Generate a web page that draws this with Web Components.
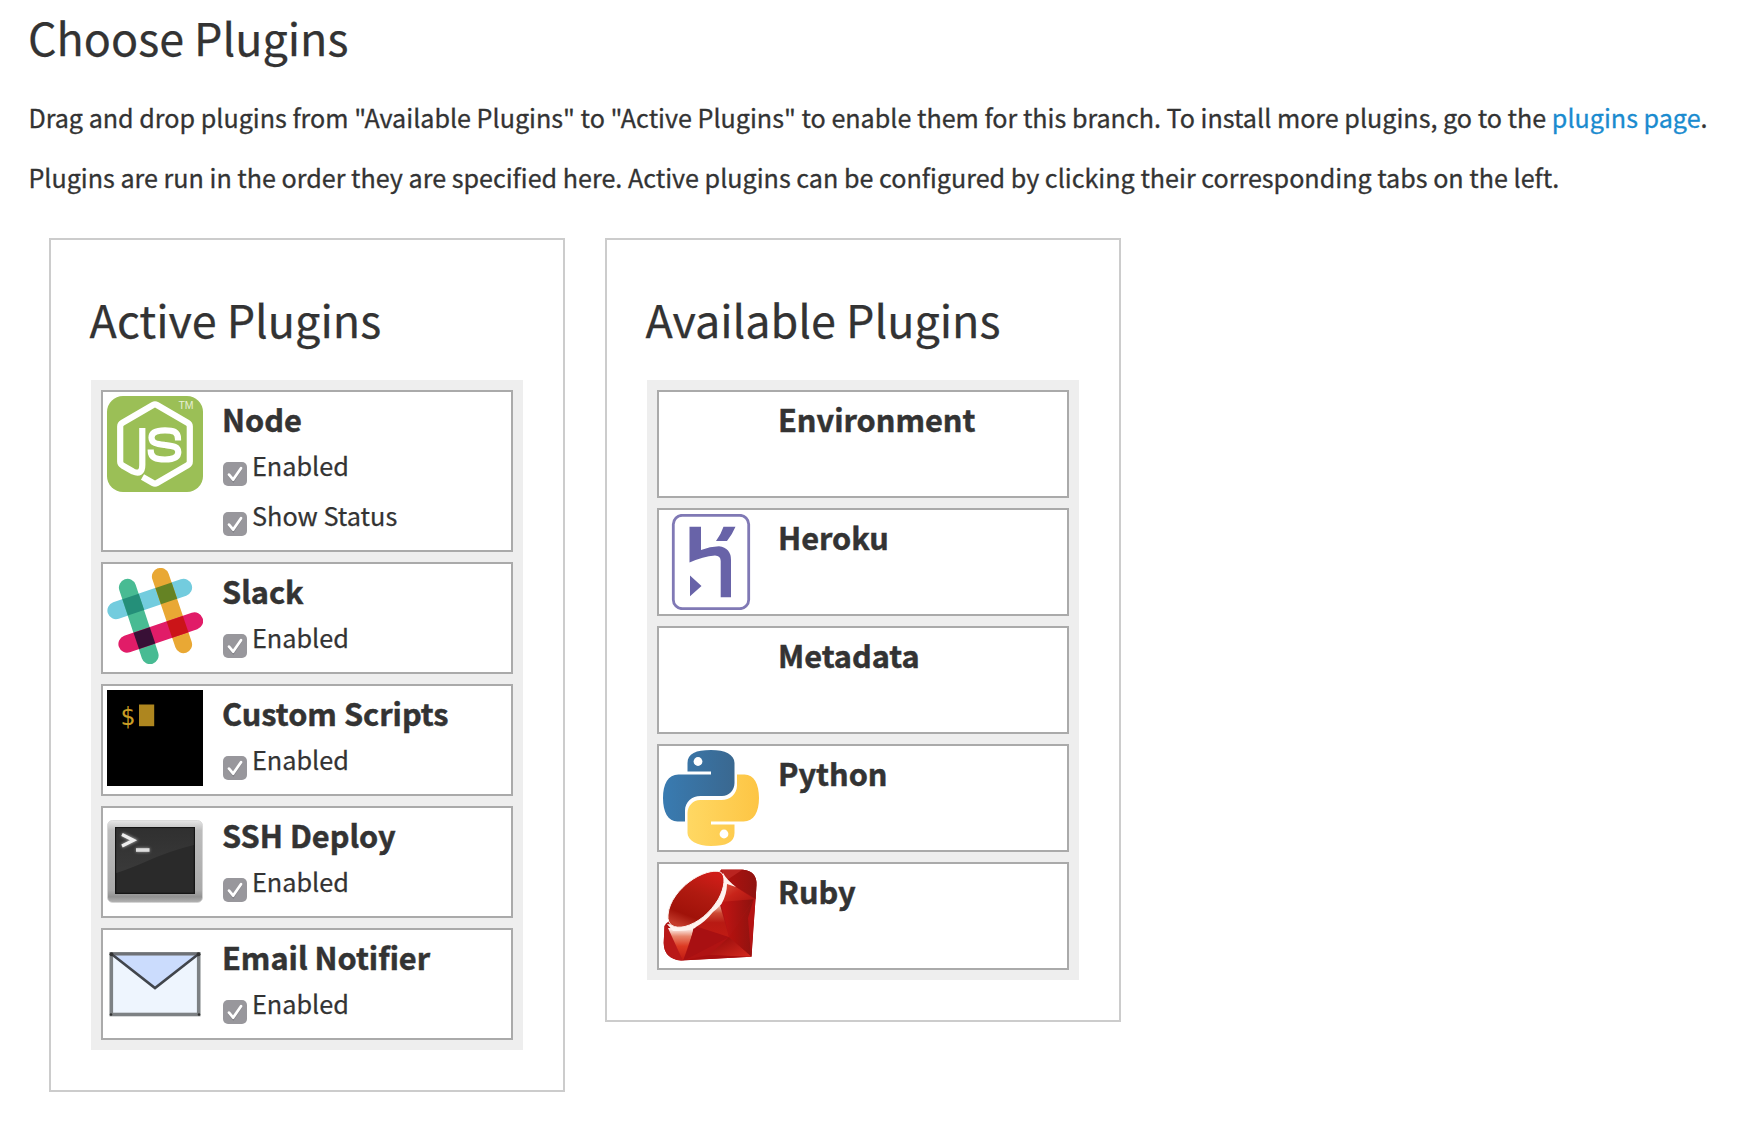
<!DOCTYPE html>
<html lang="en">
<head>
<meta charset="utf-8">
<title>Choose Plugins</title>
<style>
  body { margin: 0; background: #fff; color: #333; font-family: "Noto Sans CJK SC", "Noto Sans", sans-serif; }
</style>
</head>
<body>
<plugin-page heading="Choose Plugins">
  <p slot="intro">Drag and drop plugins from "Available Plugins" to "Active Plugins" to enable them for this branch. To install more plugins, go to the <page-link>plugins page</page-link>.</p>
  <p slot="intro">Plugins are run in the order they are specified here. Active plugins can be configured by clicking their corresponding tabs on the left.</p>
  <plugin-list heading="Active Plugins">
    <plugin-card name="Node"><plugin-icon slot="icon" kind="node"></plugin-icon><check-option>Enabled</check-option><check-option>Show Status</check-option></plugin-card>
    <plugin-card name="Slack"><plugin-icon slot="icon" kind="slack"></plugin-icon><check-option>Enabled</check-option></plugin-card>
    <plugin-card name="Custom Scripts"><plugin-icon slot="icon" kind="scripts"></plugin-icon><check-option>Enabled</check-option></plugin-card>
    <plugin-card name="SSH Deploy"><plugin-icon slot="icon" kind="ssh"></plugin-icon><check-option>Enabled</check-option></plugin-card>
    <plugin-card name="Email Notifier"><plugin-icon slot="icon" kind="email"></plugin-icon><check-option>Enabled</check-option></plugin-card>
  </plugin-list>
  <plugin-list heading="Available Plugins">
    <plugin-card name="Environment"></plugin-card>
    <plugin-card name="Heroku"><plugin-icon slot="icon" kind="heroku"></plugin-icon></plugin-card>
    <plugin-card name="Metadata"></plugin-card>
    <plugin-card name="Python"><plugin-icon slot="icon" kind="python"></plugin-icon></plugin-card>
    <plugin-card name="Ruby"><plugin-icon slot="icon" kind="ruby"></plugin-icon></plugin-card>
  </plugin-list>
</plugin-page>

<script>
const ICONS = {
  node: `
    <rect width="96" height="96" rx="16" fill="#9bbf56"/>
    <g fill="none" stroke="#fff" stroke-width="6.2" stroke-linejoin="round">
      <path d="M35.3 32 V69 Q35.3 79.5 26 75.5 L15.500 69.500 Q13.200 68 13.200 65.500 V30.500 Q13.200 28 15.500 26.700 L46 9 Q48 7.800 50 9 L80.500 26.700 Q82.800 28 82.800 30.500 V65.500 Q82.800 68 80.500 69.300 L50 87 Q48 88.200 46 87 L35.500 81"/>
      <path d="M71 44.500 V43 C71 35.500 66 34.300 58 34.300 C50 34.300 44.500 36 44.500 41.500 C44.500 47.500 50 48 58 49 C66 50 71.300 50.500 71.300 56 C71.300 62 66 63.500 58 63.500 C49 63.500 43.700 62 43.700 54.500 V53.500"/>
    </g>
    <text x="71.500" y="13" font-family="Liberation Sans" font-size="10.500" fill="#e6efd5" textLength="15">TM</text>`,
  slack: `
    <g fill="none" stroke-width="17.200" stroke-linecap="round">
      <path d="M9 42.500 L76.500 19.500" stroke="#73ccde"/>
      <path d="M20.500 19.500 L43 87.500" stroke="#48bb93"/>
      <path d="M53.500 8.500 L76.500 76.500" stroke="#e9a834"/>
      <path d="M20 76 L87.500 53" stroke="#e11c68"/>
    </g>
    <g>
      <rect x="-8.600" y="-8.600" width="17.200" height="17.200" transform="translate(26.300 36.600) rotate(-18.700)" fill="#248f79"/>
      <rect x="-8.600" y="-8.600" width="17.200" height="17.200" transform="translate(59.300 25.400) rotate(-18.700)" fill="#658324"/>
      <rect x="-8.600" y="-8.600" width="17.200" height="17.200" transform="translate(37.400 70.100) rotate(-18.700)" fill="#380f36"/>
      <rect x="-8.600" y="-8.600" width="17.200" height="17.200" transform="translate(70.500 58.800) rotate(-18.700)" fill="#cb1418"/>
    </g>`,
  scripts: `
    <rect width="96" height="96" fill="#000"/>
    <text x="13.200" y="34.500" font-family="DejaVu Sans Mono" font-size="24.500" fill="#c99d25">$</text>
    <rect x="32" y="14.500" width="15.200" height="21.700" fill="#ae861f"/>`,
  ssh: `
    <defs>
      <linearGradient id="fr" x2="0" y2="1"><stop offset="0" stop-color="#e6e6e6"/><stop offset=".12" stop-color="#bdbdbd"/><stop offset=".85" stop-color="#aaa"/><stop offset=".93" stop-color="#929292"/><stop offset="1" stop-color="#b4b4b4"/></linearGradient>
      <linearGradient id="hi" x2="0" y2="1"><stop offset="0" stop-color="#303030"/><stop offset="1" stop-color="#3a3a3a"/></linearGradient>
      <filter id="gl" x="-50%" y="-50%" width="200%" height="200%"><feGaussianBlur stdDeviation="1.500"/></filter>
    </defs>
    <rect x=".5" y="8.500" width="95" height="82" rx="5" fill="url(#fr)" stroke="#d4d4d4" stroke-width=".8"/>
    <rect x="8" y="15" width="80" height="67" fill="#151515"/>
    <rect x="9.300" y="16.300" width="77.400" height="64.400" fill="#2a2a2a"/>
    <path d="M9.300 16.300 H86.700 V33 Q62 39 38 50 Q22 57 9.300 61Z" fill="url(#hi)"/>
    <g fill="none"><path d="M15 22.500 L27 28.300 L15 34 M29 38 H42.500" stroke="#999" stroke-width="4" filter="url(#gl)"/><path d="M15 22.500 L26.500 28.300 L15 34" stroke="#eee" stroke-width="3.200"/><path d="M29 38 H42.500" stroke="#ddd" stroke-width="3.600"/></g>`,
  email: `
    <rect x="4.300" y="19.800" width="87.400" height="60.700" fill="#eef5fe"/>
    <path d="M4.500 20 H91.500 L48 54Z" fill="#cbdcfd"/>
    <rect x="4.300" y="19.800" width="87.400" height="60.700" fill="none" stroke="#7d8184" stroke-width="3.600"/>
    <path d="M4.500 20 L48 54 L91.500 20" fill="none" stroke="#41454c" stroke-width="2.600"/>
    <path d="M3.500 20 H92.500" stroke="#6a6d72" stroke-width="1.500"/>
    <g fill="#333"><circle cx="4.500" cy="20.300" r="2"/><circle cx="91.500" cy="20.300" r="2"/><circle cx="4" cy="80.500" r="1.300"/><circle cx="92" cy="80.500" r="1.300"/></g>`,
  heroku: `
    <rect x="10.300" y="1.300" width="75.400" height="93.400" rx="9" fill="none" stroke="#8079b5" stroke-width="2.800"/>
    <path fill="#6863a8" d="M26.500 12.800 H38 V36 Q47 32.300 56 32.300 Q68 34 68 46 V83.300 H57.700 V47 Q57.700 41.700 52 41.500 Q40 42.500 26.500 48.500Z M60.500 12.800 H72.500 Q69.500 20 64 27 H53 Q58 20.500 60.500 12.800Z M27 61.500 L38.500 72 L27 82.300Z"/>`,
  python: `
    <defs>
      <linearGradient id="pb"><stop offset="0" stop-color="#397bb1"/><stop offset="1" stop-color="#3a6890"/></linearGradient>
      <linearGradient id="py"><stop offset="0" stop-color="#ffd863"/><stop offset="1" stop-color="#fdc544"/></linearGradient>
    </defs>
    <path fill="url(#pb)" d="M48 0 C33 0 24.500 3.500 24.500 13 V21.500 H48 V24.500 H15.500 C5 24.500 0 34 0 48 C0 62 5 71.500 14.500 71.500 H22 V60.500 C22 52 29 46 37.500 46 H59 C66 46 71.500 40 71.500 33 V13 C71.500 4.500 62 0 48 0Z"/>
    <circle cx="35" cy="11.500" r="4.400" fill="#fff"/>
    <path fill="url(#py)" d="M48 96 C63 96 71.500 92.500 71.500 83 V74.500 H48 V71.500 H80.500 C91 71.500 96 62 96 48 C96 34 91 24.500 81.500 24.500 H74 V35.500 C74 44 67 50 58.500 50 H37 C30 50 24.500 56 24.500 63 V83 C24.500 90 34 96 48 96Z"/>
    <circle cx="61" cy="84" r="4.400" fill="#fff"/>`,
  ruby: `
    <defs>
      <linearGradient id="r1" x1=".7" y1="0" x2=".3" y2="1"><stop offset="0" stop-color="#d01d18"/><stop offset=".4" stop-color="#b01a10"/><stop offset=".8" stop-color="#a01209"/><stop offset="1" stop-color="#c43a2a"/></linearGradient>
      <linearGradient id="r2" x2="0" y2="1"><stop offset="0" stop-color="#fff"/><stop offset=".25" stop-color="#e8866c"/><stop offset=".55" stop-color="#dc3a22"/><stop offset="1" stop-color="#be1712"/></linearGradient>
      <linearGradient id="r3" x2="0" y2="1"><stop offset="0" stop-color="#f0c0ac"/><stop offset=".25" stop-color="#cd4a34"/><stop offset=".55" stop-color="#b81a13"/><stop offset="1" stop-color="#c01b14"/></linearGradient>
      <linearGradient id="r4" x2="1" y2="1"><stop offset="0" stop-color="#df5b43"/><stop offset=".5" stop-color="#c8241a"/><stop offset="1" stop-color="#aa1511"/></linearGradient>
      <linearGradient id="r5" x2="1" y2="1"><stop offset="0" stop-color="#8f0809"/><stop offset="1" stop-color="#d62a1f"/></linearGradient>
      <linearGradient id="r6" x2="1" y2="0"><stop offset="0" stop-color="#c31413"/><stop offset="1" stop-color="#8c120e"/></linearGradient>
      <linearGradient id="r7" x2="1" y2="0"><stop offset="0" stop-color="#b5110e"/><stop offset="1" stop-color="#8e1310"/></linearGradient>
      <clipPath id="rc"><path d="M58 1.800 H80 Q94 3 93.500 17 L88.500 88.800 L18 92.500 Q1 91 .7 75 L1.500 58 L3 55.500 L10 50 L55 5Z"/></clipPath>
    </defs>
    <g clip-path="url(#rc)">
      <rect width="96" height="96" fill="#b01313"/>
      <path d="M0 54 L7 62 L20 93 H0Z" fill="#b91818"/>
      <path d="M5 60 L31 61 L20 93Z" fill="url(#r2)"/>
      <path d="M31 57 L66 69 L20 93 Q28 76 31 57Z" fill="#a81012"/>
      <path d="M32 58 L57 37 L66 69Z" fill="url(#r3)"/>
      <path d="M66 69 L89 89 L46 87Z" fill="url(#r5)"/>
      <path d="M18 93 L46 87 L89 89Z" fill="#a80f0f"/>
      <path d="M58 34 L91 31 L66 69Z" fill="url(#r6)"/>
      <path d="M91 31 L89 89 L66 69Z" fill="url(#r7)"/>
      <path d="M94 20 L88 89 L85 50Z" fill="#b51313"/>
      <path d="M64 13 L91 31 L58 34Z" fill="url(#r4)"/>
      <path d="M57 0 H94 V32 L64 13Z" fill="url(#r7)"/>
      <path d="M57 0 H82 L64 12Z" fill="#ba2420"/>
      <path d="M60 5 Q64 12 73 19 L64 16 Q64 26 58.500 36 Q54 41 50 44 Q42 54 33 59 Q30 63 10 63 L4 56 L14 57 Q32 55 48 38 Q60 22 59 8Z" fill="#fff3ef"/>
    </g>
    <path d="M5 47 C6 33 17 21 26 14 C38 5 50 1.800 57 3.800 C63.500 7 61.500 20 55.500 31 C47 45 35 55 22 58.500 C11 61 4 57 5 47Z" fill="url(#r1)" stroke="#fdf1ed" stroke-width="1"/>`
};

/* Defines an element whose open shadow root is filled from its render() markup. */
const define = (tag, render) => customElements.define(tag, class extends HTMLElement {
  connectedCallback() {
    if (this.shadowRoot) return;
    const t = document.createElement('template');
    t.innerHTML = render(this);
    this.attachShadow({ mode: 'open' }).append(t.content.cloneNode(true));
  }
});

define('plugin-icon', el => `
  <style>:host { display: block; width: 96px; height: 96px; } svg { display: block; }</style>
  <svg width="96" height="96" viewBox="0 0 96 96">${ICONS[el.getAttribute('kind')] || ''}</svg>`);

define('page-link', () => `
  <style>:host { display: inline; } a { color: #1a8bcf; text-decoration: none; }</style>
  <a href="#"><slot></slot></a>`);

define('check-option', () => `
  <style>
    :host { display: flex; gap: 5px; height: 50px; line-height: 50px; font-size: 25.250px; padding-left: 1px; white-space: nowrap; -webkit-text-stroke: .25px; }
    svg { display: block; flex: none; margin-top: 22px; }
  </style>
  <svg width="24" height="24" viewBox="0 0 24 24">
    <rect width="24" height="24" rx="5" fill="#98979c"/>
    <path d="M6 13.800 L10.300 19 L18 7.200" fill="none" stroke="#77767b" stroke-width="2.400" stroke-linecap="round" opacity=".6"/>
    <path d="M6 12.600 L10.200 17.600 L18 6.200" fill="none" stroke="#fff" stroke-width="2.700" stroke-linecap="round" stroke-linejoin="round"/>
  </svg>
  <span><slot></slot></span>`);

define('plugin-card', el => `
  <style>
    :host { display: flex; gap: 19px; box-sizing: border-box; padding: 4px; background: #fff; border: 2px solid #aaa; min-height: 108px; }
    .icon { flex: none; width: 96px; height: 96px; }
    .body { padding-top: 3px; }
    h3 { margin: 0; font-size: 30.700px; line-height: 40px; height: 41px; font-weight: 700; white-space: nowrap; -webkit-text-stroke: .5px; }
    .options { display: block; }
    .options.filled { padding-bottom: 6px; }
  </style>
  <div class="icon"><slot name="icon"></slot></div>
  <div class="body">
    <h3>${el.getAttribute('name')}</h3>
    <div class="options ${el.querySelector('check-option') ? 'filled' : ''}"><slot></slot></div>
  </div>`);

define('plugin-list', el => `
  <style>
    :host { display: block; box-sizing: border-box; width: 516px; border: 2px solid #ccc; padding: 49px 40px 40px; }
    h2 { margin: 0 0 31px; font-size: 44.900px; line-height: 60px; font-weight: 400; white-space: nowrap; text-indent: -1.400px; -webkit-text-stroke: .25px; }
    .cards { display: flex; flex-direction: column; gap: 10px; padding: 10px; background: #eee; }
  </style>
  <h2>${el.getAttribute('heading')}</h2>
  <div class="cards"><slot></slot></div>`);

define('plugin-page', el => `
  <style>
    :host { display: block; padding: 7px 28px 0; }
    h1 { margin: 0 0 30px; font-size: 44.850px; line-height: 60px; font-weight: 400; -webkit-text-stroke: .25px; }
    .intro { display: flex; flex-direction: column; gap: 20px; }
    ::slotted(p) { margin: 0; font-size: 25.120px; line-height: 40px; white-space: nowrap; text-indent: .4px; -webkit-text-stroke: .3px; }
    .lists { display: flex; align-items: flex-start; gap: 40px; margin: 41px 0 0 21px; }
  </style>
  <h1>${el.getAttribute('heading')}</h1>
  <div class="intro"><slot name="intro"></slot></div>
  <div class="lists"><slot></slot></div>`);
</script>
</body>
</html>
